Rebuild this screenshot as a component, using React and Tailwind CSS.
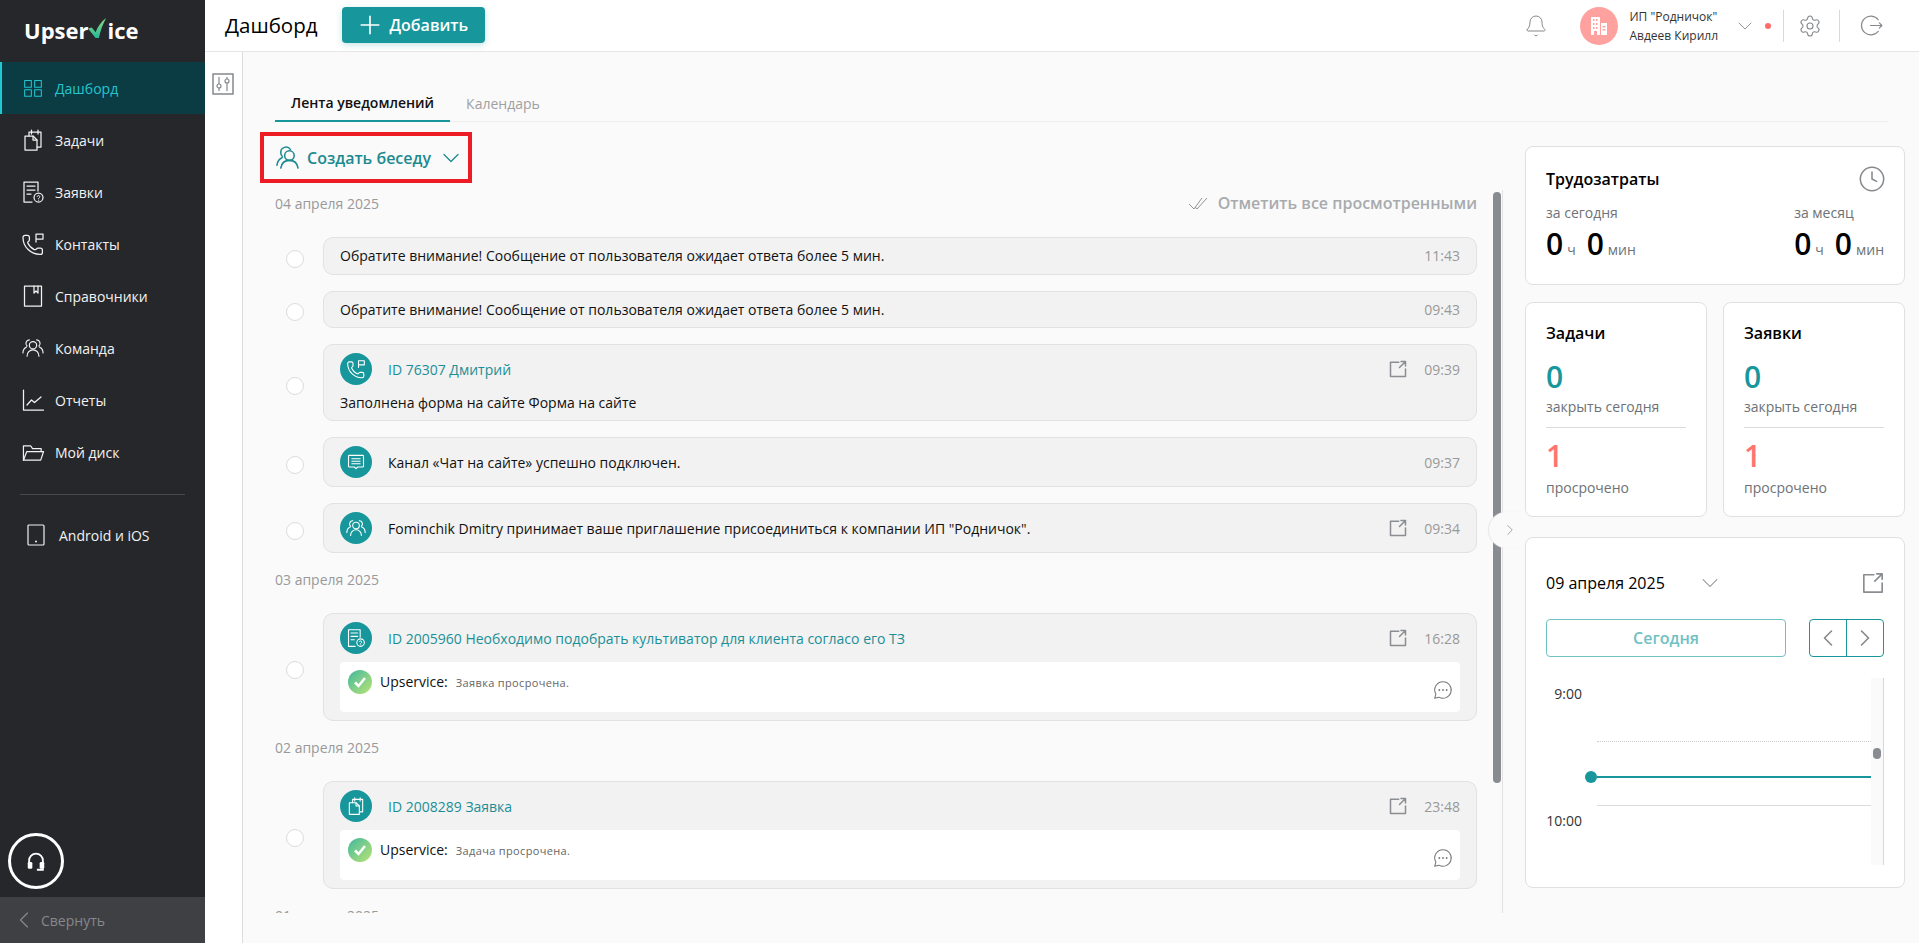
import { Bell, ChevronDown, ChevronLeft, ChevronRight, Clock, Plus, Settings } from 'lucide-react'

function Ico({ size = 20, sw = 1.5, className = '', children }) {
  return (
    <svg
      width={size}
      height={size}
      viewBox="0 0 24 24"
      fill="none"
      stroke="currentColor"
      strokeWidth={sw}
      strokeLinecap="round"
      strokeLinejoin="round"
      className={className}
      aria-hidden
    >
      {children}
    </svg>
  )
}

const GridIcon = (p) => (
  <Ico {...p}>
    <rect x="2" y="3" width="8" height="8" />
    <rect x="14" y="3" width="8" height="8" />
    <rect x="2" y="14" width="8" height="8" />
    <rect x="14" y="14" width="8" height="8" />
  </Ico>
)

const TasksIcon = (p) => (
  <Ico {...p}>
    <path d="M4 8h8l4 4v10H4z" />
    <path d="M12 8v4h4" />
    <path d="M8 8V4h12v15h-4" />
    <path d="M10.500 2v4M17 2v4" />
  </Ico>
)

const RequestIcon = (p) => (
  <Ico {...p}>
    <path d="M17 11V2H3v20h8" />
    <path d="M6 6h8M6 10h8M6 14h4" />
    <circle cx="17.500" cy="17.500" r="4.500" />
    <path d="M16.200 16.400a1.300 1.300 0 1 1 1.800 1.500l-.4.4v.5M17.600 20.200v.1" strokeWidth="1" />
  </Ico>
)

const PhoneFlagIcon = (p) => (
  <Ico {...p}>
    <path d="M13.800 17.600a1 1 0 0 0 1.200-.3l.4-.5a2 2 0 0 1 1.600-.8h2.400a2 2 0 0 1 2 2v2.400a2 2 0 0 1-2 2A17 17 0 0 1 2 5.400a2 2 0 0 1 2-2h2.400a2 2 0 0 1 2 2v2.400a2 2 0 0 1-.8 1.600l-.5.400a1 1 0 0 0-.3 1.200 13 13 0 0 0 6.500 6.600" />
    <path d="M15 10V2h7v5h-7" />
  </Ico>
)

const BookIcon = (p) => (
  <Ico {...p}>
    <rect x="3.500" y="2" width="17" height="20" />
    <path d="M13 2v7l2-2 2 2V2" />
  </Ico>
)

const TeamIcon = (p) => (
  <Ico {...p}>
    <circle cx="12" cy="9" r="4" />
    <path d="M5.500 21c0-4 2.800-7 6.500-7s6.500 3 6.500 7" />
    <path d="M8 3.200a3.800 3.800 0 0 0-2.500 6.600M1 17.500c0-3 1.600-5.600 4-6.700" />
    <path d="M16 3.200a3.800 3.800 0 0 1 2.500 6.600M23 17.500c0-3-1.600-5.600-4-6.700" />
  </Ico>
)

const ChartIcon = (p) => (
  <Ico {...p}>
    <path d="M2.500 2v20h20" />
    <path d="M6 17l4.500-5 3 2.500L20 9" />
  </Ico>
)

const FolderIcon = (p) => (
  <Ico {...p}>
    <path d="M1.500 20V5h7.500l2 3h9v3" />
    <path d="M1.500 20h18l3-9H5z" />
  </Ico>
)

const TabletIcon = (p) => (
  <Ico {...p}>
    <rect x="4" y="2" width="16" height="20" rx="1" />
    <path d="M12 18.500v.1" strokeWidth="2" />
  </Ico>
)

const ChatIcon = (p) => (
  <Ico {...p}>
    <path d="M4 4h16a1 1 0 0 1 1 1v12a1 1 0 0 1-1 1h-6l-2 2-2-2H4a1 1 0 0 1-1-1V5a1 1 0 0 1 1-1z" />
    <path d="M7 8h10M7 11h10M7 14h10" />
  </Ico>
)

const ExternalIcon = (p) => (
  <Ico {...p}>
    <path d="M13 3H2v19h20V12" />
    <path d="M14 10l8-8M16 2h6v6" />
  </Ico>
)

const ConversationIcon = (p) => (
  <Ico {...p}>
    <circle cx="14" cy="10" r="5" />
    <path d="M5 23c.8-5 4.200-8 9-8s8.200 3 9 8" />
    <path d="M15 3.500A5.500 5.500 0 0 0 5 7c0 1.500.6 2.800 1.500 3.700M1 20c.4-3.500 2.200-6.400 5.500-8" />
  </Ico>
)

const nav = [
  { label: 'Дашборд', icon: GridIcon, size: 20, active: true },
  { label: 'Задачи', icon: TasksIcon },
  { label: 'Заявки', icon: RequestIcon },
  { label: 'Контакты', icon: PhoneFlagIcon },
  { label: 'Справочники', icon: BookIcon },
  { label: 'Команда', icon: TeamIcon, size: 22 },
  { label: 'Отчеты', icon: ChartIcon },
  { label: 'Мой диск', icon: FolderIcon, size: 23 },
]

function Logo() {
  return (
    <div className="flex h-[62px] items-center pb-[2px] pl-[24px] text-[22px] leading-none font-bold text-white">
      <span>Upser</span>
      <svg width="19" height="21" viewBox="0 0 20 22" className="-mt-[3px]" aria-hidden>
        <defs>
          <linearGradient id="logo-check" x1="0" y1="0" x2="0" y2="1">
            <stop offset="0" stopColor="#8fdc7e" />
            <stop offset="1" stopColor="#27b59a" />
          </linearGradient>
        </defs>
        <path d="M0 11l4-1 4 5C10 9 14 4 19 0c-3 6-6 13-7.500 21H8z" fill="url(#logo-check)" />
      </svg>
      <span>ice</span>
    </div>
  )
}

function Sidebar() {
  return (
    <aside className="flex h-full w-[205px] shrink-0 flex-col bg-[#26272a] text-[14px] text-[#f2f2f2]">
      <Logo />
      <nav className="flex flex-col">
        {nav.map((item) => (
          <a
            key={item.label}
            className={`flex h-[52px] items-center gap-[10px] ${
              item.active ? 'border-l-2 border-[#1fc9d1] bg-[#0b3c44] pl-[19px] text-[#22c6d0]' : 'pl-[21px]'
            }`}
          >
            <span className="flex w-[24px] justify-center">
              <item.icon size={item.size || 24} sw={1.25} />
            </span>
            {item.label}
          </a>
        ))}
      </nav>
      <div className="mx-[20px] mt-[16px] border-t border-[#47484b]" />
      <a className="mt-[14px] flex h-[52px] items-center gap-[11px] pl-[24px]">
        <TabletIcon size={24} sw={1.2} />
        Android и iOS
      </a>
      <div className="mt-auto mb-[8px] ml-[8px] flex h-[56px] w-[56px] items-center justify-center rounded-full border-[3px] border-white">
        <svg width="22" height="22" viewBox="0 0 24 24" fill="none" stroke="white" strokeWidth="2" aria-hidden>
          <path d="M4.500 15v-3.500a7.500 7.500 0 0 1 15 0V15" />
          <rect x="3" y="13" width="5" height="7.500" rx="1.500" fill="white" stroke="none" />
          <rect x="16" y="13" width="5" height="7.500" rx="1.500" fill="white" stroke="none" />
          <path d="M19.500 20v1.500H13" />
        </svg>
      </div>
      <div className="flex h-[46px] items-center gap-[3px] bg-[#3f4044] pl-[10px] text-[#85888c]">
        <ChevronLeft size={28} strokeWidth={1} />
        Свернуть
      </div>
    </aside>
  )
}

function Header() {
  return (
    <header className="flex h-[52px] shrink-0 items-center border-b border-[#e6e6e6] bg-white pr-[35px] pl-[20px]">
      <h1 className="text-[20.500px] font-medium text-black">Дашборд</h1>
      <button
        type="button"
        className="mb-[1px] ml-[24px] flex h-[36px] w-[143px] items-center gap-[5px] rounded-[4px] bg-[#17979c] pl-[13px] text-[16px] font-semibold text-white shadow-[0_2px_6px_rgba(23,151,156,0.25)]"
      >
        <Plus size={30} strokeWidth={1.3} />
        Добавить
      </button>
      <Bell size={24} strokeWidth={1} className="mr-[32px] ml-auto text-[#85888c]" />
      <div className="flex h-[38px] w-[38px] items-center justify-center rounded-full bg-[#ffa19e]">
        <svg width="20" height="20" viewBox="0 0 20 20" fill="white" aria-hidden>
          <path
            fillRule="evenodd"
            d="M2 1h9v18H8v-4H5v4H2zM4 3v2h1.500V3zm3 0v2h1.500V3zM4 7v2h1.500V7zm3 0v2h1.500V7zM4 11v2h1.500v-2zm3 0v2h1.500v-2zM12 7h6v12h-6zm1.500 3v1.500h3V10zm0 3v1.500h3V13z"
          />
        </svg>
      </div>
      <div className="ml-[11px] text-[12px] leading-[19px] text-[#333]">
        <div>ИП "Родничок"</div>
        <div>Авдеев Кирилл</div>
      </div>
      <ChevronDown size={24} strokeWidth={0.9} className="ml-[15px] text-[#85888c]" />
      <span className="ml-[8px] h-[6px] w-[6px] rounded-full bg-[#ff6b6b]" />
      <span className="ml-[12px] h-[32px] border-l border-[#d9d9d9]" />
      <Settings size={24} strokeWidth={1.1} className="ml-[14px] text-[#85888c]" />
      <span className="ml-[17px] h-[32px] border-l border-[#d9d9d9]" />
      <span className="ml-[19px] text-[#85888c]">
        <Ico size={25} sw={1.1}>
          <path d="M18.500 6.500a9 9 0 1 0 0 11" />
          <path d="M11 12h11M19.500 9.500l2.500 2.500-2.500 2.500" />
        </Ico>
      </span>
    </header>
  )
}

function IconCircle({ icon: Icon }) {
  return (
    <span className="flex h-[32px] w-[32px] shrink-0 items-center justify-center rounded-full bg-[#17979c] text-white">
      <Icon size={20} sw={1.3} />
    </span>
  )
}

function Notice({ time, external }) {
  return (
    <div className="ml-auto flex shrink-0 items-center text-[14px] text-[#999]">
      {external && <ExternalIcon size={18} sw={2} className="mr-[17px] text-[#8a8d91]" />}
      {time}
    </div>
  )
}

function Row({ children }) {
  return (
    <div className="mb-[16px] flex items-center gap-[19px] pl-[11px]">
      <span className="mt-[6px] h-[18px] w-[18px] shrink-0 rounded-full border border-[#dcdcdc] bg-white" />
      {children}
    </div>
  )
}

const cardClass = 'flex-1 rounded-[10px] border border-[#e2e2e2] bg-[#f2f2f2] text-[14px] text-[#111]'

function PlainCard({ text, time }) {
  return (
    <Row>
      <div className={`${cardClass} flex h-[37.670px] items-center px-[16px]`}>
        {text}
        <Notice time={time} />
      </div>
    </Row>
  )
}

function IconCard({ icon, text, time, external }) {
  return (
    <Row>
      <div className={`${cardClass} flex items-center gap-[16px] px-[16px] py-[8px]`}>
        <IconCircle icon={icon} />
        {text}
        <Notice time={time} external={external} />
      </div>
    </Row>
  )
}

function LinkCard({ icon, title, time, children }) {
  return (
    <Row>
      <div className={`${cardClass} px-[16px] py-[8px]`}>
        <div className="flex items-center gap-[16px]">
          <IconCircle icon={icon} />
          <span className="text-[#1b8f97]">{title}</span>
          <Notice time={time} external />
        </div>
        {children}
      </div>
    </Row>
  )
}

function StatusBox({ text }) {
  return (
    <div className="mt-[8px] flex h-[50px] rounded-[4px] bg-white p-[8px]">
      <span className="flex h-[24px] w-[24px] shrink-0 items-center justify-center rounded-full bg-linear-to-br from-[#38b79c] to-[#b6e46f]">
        <svg width="14" height="14" viewBox="0 0 14 14" fill="none" stroke="white" strokeWidth="2.500" aria-hidden>
          <path d="M2 7.500l3.500 3.500L12 3" />
        </svg>
      </span>
      <span className="ml-[8px] leading-[24px]">Upservice:</span>
      <span className="ml-[8px] text-[11px] leading-[25px] tracking-[0.35px] text-[#666]">{text}</span>
      <span className="mt-[9px] mr-[-2px] ml-auto text-[#777]">
        <Ico size={22} sw={1.1}>
          <path d="M12 3a9 9 0 1 1-4.500 16.800L3 21l1.200-4.500A9 9 0 0 1 12 3z" />
          <path d="M8 12v.1M12 12v.1M16 12v.1" strokeWidth="2" />
        </Ico>
      </span>
    </div>
  )
}

function DateLabel({ children }) {
  return <div className="mb-[23px] pt-[1px] text-[14px] leading-[20px] text-[#999]">{children}</div>
}

function Feed() {
  return (
    <div className="relative min-w-0 flex-1">
      <button
        type="button"
        className="mt-[10px] -ml-[15px] flex h-[51px] w-[212px] items-center border-4 border-[#ed1c24] pl-[12px] text-[16px] font-semibold text-[#1b8a90]"
      >
        <ConversationIcon size={23} sw={1.6} />
        <span className="ml-[8px]">Создать беседу</span>
        <ChevronDown size={28} strokeWidth={1.1} className="ml-[6px]" />
      </button>

      <div className="relative mt-[7px] h-[723px] overflow-hidden border-r border-[#e2e2e2] pt-[3px] pr-[25px]">
        <div className="mb-[24px] flex h-[20px] items-center justify-between">
          <span className="text-[14px] text-[#999]">04 апреля 2025</span>
          <span className="flex items-center gap-[10px] text-[16px] font-semibold text-[#a8abae]">
            <svg width="20" height="14" viewBox="0 0 20 14" fill="none" stroke="#85888c" strokeWidth="0.900" aria-hidden>
              <path d="M1 8l5 5L14 2M7 11l2 2 10-11" />
            </svg>
            Отметить все просмотренными
          </span>
        </div>
        <PlainCard text="Обратите внимание! Сообщение от пользователя ожидает ответа более 5 мин." time="11:43" />
        <PlainCard text="Обратите внимание! Сообщение от пользователя ожидает ответа более 5 мин." time="09:43" />
        <LinkCard icon={PhoneFlagIcon} title="ID 76307 Дмитрий" time="09:39">
          <p className="mt-[8px] -mb-[1px] leading-[20px]">Заполнена форма на сайте Форма на сайте</p>
        </LinkCard>
        <IconCard icon={ChatIcon} text="Канал «Чат на сайте» успешно подключен." time="09:37" />
        <IconCard
          icon={TeamIcon}
          text={'Fominchik Dmitry принимает ваше приглашение присоединиться к компании ИП "Родничок".'}
          time="09:34"
          external
        />
        <DateLabel>03 апреля 2025</DateLabel>
        <LinkCard icon={RequestIcon} title="ID 2005960 Необходимо подобрать культиватор для клиента согласо его ТЗ" time="16:28">
          <StatusBox text="Заявка просрочена." />
        </LinkCard>
        <DateLabel>02 апреля 2025</DateLabel>
        <LinkCard icon={TasksIcon} title="ID 2008289 Заявка" time="23:48">
          <StatusBox text="Задача просрочена." />
        </LinkCard>
        <DateLabel>01 апреля 2025</DateLabel>
        <span className="absolute top-[2px] right-[1px] h-[591px] w-[8px] rounded-full bg-[#888b8f]" />
      </div>

      <span className="absolute top-[390px] -right-[19px] flex h-[36px] w-[33px] items-center justify-end rounded-l-full bg-[#fafafa] pr-[3px] text-[#85888c] shadow-[-1px_0_1px_#e6e6e6]">
        <ChevronRight size={18} strokeWidth={1} />
      </span>
    </div>
  )
}

function Panel({ className = '', children }) {
  return <section className={`rounded-[8px] border border-[#e0e0e0] bg-white ${className}`}>{children}</section>
}

function Effort({ label }) {
  return (
    <div>
      <div className="text-[14px] leading-[20px] text-[#6e7276]">{label}</div>
      <div className="mt-[2px] flex items-baseline text-[#6e7276]">
        <span className="text-[30px] leading-[38px] font-semibold text-black">0</span>
        <span className="ml-[4px] text-[14px]">ч</span>
        <span className="ml-[11px] text-[30px] leading-[38px] font-semibold text-black">0</span>
        <span className="ml-[4px] text-[14px]">мин</span>
      </div>
    </div>
  )
}

function Counter({ title }) {
  return (
    <Panel className="h-[215px] flex-1 px-[20px] pt-[18px]">
      <h3 className="text-[16px] leading-[24px] font-semibold text-black">{title}</h3>
      <div className="mt-[16px] text-[30px] leading-[32px] font-semibold text-[#17979c]">0</div>
      <div className="mt-[4px] text-[14px] leading-[20px] text-[#6e7276]">закрыть сегодня</div>
      <div className="mt-[10px] border-t border-[#dcdcdc]" />
      <div className="mt-[12px] text-[30px] leading-[32px] font-semibold text-[#ff7370]">1</div>
      <div className="mt-[6px] text-[14px] leading-[20px] text-[#6e7276]">просрочено</div>
    </Panel>
  )
}

function CalendarPanel() {
  return (
    <Panel className="mt-[20px] h-[351px] px-[20px] pt-[31px]">
      <div className="flex items-center">
        <span className="text-[16px] leading-[24px] font-medium text-black">09 апреля 2025</span>
        <ChevronDown size={28} strokeWidth={0.9} className="ml-[31px] text-[#85888c]" />
        <ExternalIcon size={22} sw={1.8} className="ml-auto text-[#8a8d91]" />
      </div>
      <div className="mt-[22px] flex">
        <button
          type="button"
          className="h-[38px] w-[240px] rounded-[4px] border border-[#70c1c4] text-[16px] font-semibold text-[#70c1c4]"
        >
          Сегодня
        </button>
        <div className="ml-auto flex h-[38px] w-[75px] rounded-[4px] border border-[#17979c] text-[#85888c]">
          <span className="flex flex-1 items-center justify-center border-r border-[#17979c]">
            <ChevronLeft size={28} strokeWidth={1.4} />
          </span>
          <span className="flex flex-1 items-center justify-center">
            <ChevronRight size={28} strokeWidth={1.4} />
          </span>
        </div>
      </div>
      <div className="relative mt-[21px] flex h-[187px] text-[14px] text-[#333]">
        <div className="w-[36px] pt-[6px] text-right leading-[20px]">
          <div>9:00</div>
          <div className="mt-[107px]">10:00</div>
        </div>
        <div className="ml-[15px] flex-1">
          <div className="mt-[63px] border-t border-dotted border-[#ccc]" />
          <div className="mt-[63px] border-t border-[#dcdcdc]" />
        </div>
        <div className="relative w-[13px] border-r border-[#d8d8d8] bg-[#fafafa]">
          <span className="absolute top-[70px] left-[2px] h-[11px] w-[8px] rounded-full bg-[#888b8f]" />
        </div>
        <div className="absolute top-[93px] right-[13px] left-[39px] flex items-center">
          <span className="h-[12px] w-[12px] shrink-0 rounded-full bg-[#17979c]" />
          <span className="h-[2px] flex-1 bg-[#17979c]" />
        </div>
      </div>
    </Panel>
  )
}

function RightColumn() {
  return (
    <div className="ml-[22px] w-[380px] shrink-0 pt-[24px]">
      <Panel className="h-[139px] px-[20px] pt-[18px]">
        <div className="flex items-center justify-between">
          <h3 className="text-[16px] leading-[24px] font-semibold text-black">Трудозатраты</h3>
          <Clock size={28} strokeWidth={1.3} className="-mr-[2px] text-[#85888c]" />
        </div>
        <div className="mt-[10px] flex justify-between">
          <Effort label="за сегодня" />
          <Effort label="за месяц" />
        </div>
      </Panel>
      <div className="mt-[17px] flex gap-[16px]">
        <Counter title="Задачи" />
        <Counter title="Заявки" />
      </div>
      <CalendarPanel />
    </div>
  )
}

export default function App() {
  return (
    <div className="flex h-screen overflow-hidden bg-white font-['Open_Sans',sans-serif]">
      <Sidebar />
      <div className="flex min-w-0 flex-1 flex-col">
        <Header />
        <div className="flex min-h-0 flex-1">
          <div className="w-[38px] shrink-0 border-r border-[#dcdcdc] bg-white pt-[21px] pl-[7px]">
            <svg width="22" height="22" viewBox="0 0 22 22" fill="none" stroke="#85888c" aria-hidden>
              <rect x="1" y="1" width="20" height="20" strokeWidth="1.500" />
              <path d="M7 4v14M15 4v14" strokeWidth="1.200" />
              <circle cx="7" cy="13" r="2" fill="white" strokeWidth="1.200" />
              <circle cx="15" cy="8" r="2" fill="white" strokeWidth="1.200" />
            </svg>
          </div>
          <main className="min-w-0 flex-1 bg-[#fafafa] pr-[14px] pl-[32px]">
            <div className="mr-[17px] flex h-[70px] items-end border-b border-[#eeeeee] text-[14px]">
              <span className="-mb-[1px] border-b-2 border-[#17979c] px-[16px] pb-[7px] leading-[20px] font-semibold text-[#111]">
                Лента уведомлений
              </span>
              <span className="ml-[16px] pb-[7px] leading-[20px] text-[#a0a0a0]">Календарь</span>
            </div>
            <div className="flex">
              <Feed />
              <RightColumn />
            </div>
          </main>
        </div>
      </div>
    </div>
  )
}
